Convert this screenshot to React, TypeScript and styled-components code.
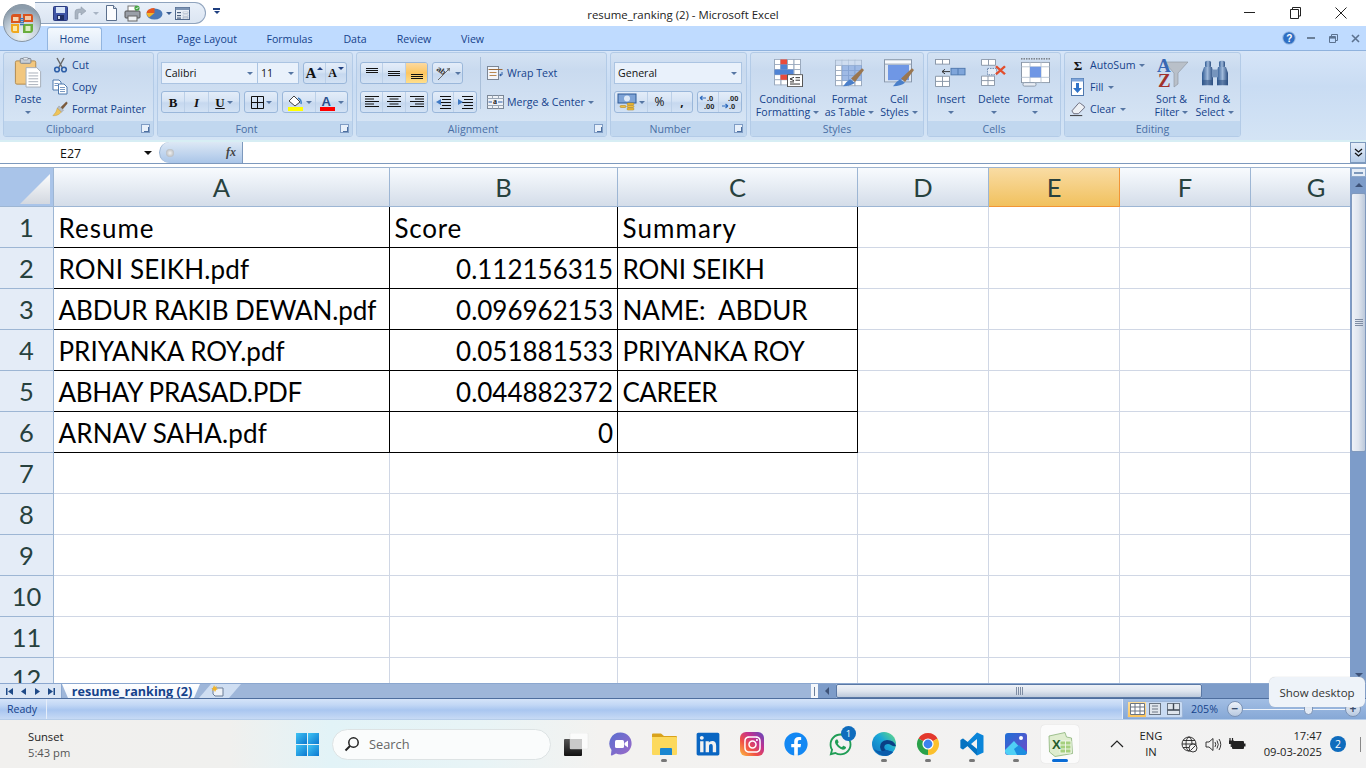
import React from 'react';
import styled, { createGlobalStyle } from 'styled-components';
import { FaLinkedin, FaFacebook, FaWhatsapp, FaInstagram } from 'react-icons/fa';

const Global = createGlobalStyle`
  html, body { margin: 0; padding: 0; background: #fff; overflow: hidden; }
  * { box-sizing: border-box; }
`;
const UI = `"Open Sans", "Noto Sans", "Liberation Sans", sans-serif`;
const CAL = `Lato, "Open Sans", sans-serif`;

const Root = styled.div`
  position: relative; width: 1366px; height: 768px; overflow: hidden;
  display: flex; flex-direction: column; font-family: ${UI}; background: #fff;
`;
/* ---------- title ---------- */
const TitleBar = styled.div`
  height: 26px; flex: none; display: grid; grid-template-columns: 1fr auto 1fr; align-items: center; background: #fff;
`;
const TitleText = styled.div`grid-column: 2; grid-row: 1; font-size: 11.4px; color: #222; padding-top: 2px;`;
const WinControls = styled.div`grid-column: 3; grid-row: 1; display: flex; justify-content: flex-end; padding-right: 2px;`;
const WinBtn = styled.div`width: 46px; height: 26px; display: flex; align-items: center; justify-content: center;`;
const Orb = styled.div`position: absolute; left: 3px; top: 4px; width: 38px; height: 38px; z-index: 3;`;
const Quick = styled.div`
  position: absolute; left: 35px; top: 2px; width: 171px; height: 22px; z-index: 2;
  display: flex; align-items: center; padding-left: 17px;
  background: linear-gradient(#e9f0f9, #dbe5f2); border: 1px solid #8fa3bd; border-left: none; border-radius: 0 12px 12px 0;
`;
const QSlot = styled.div<{ $w: number }>`width: ${p => p.$w}px; height: 20px; display: flex; align-items: center; justify-content: center; flex: none;`;
const QCustom = styled.div`position: absolute; left: 212px; top: 8px; z-index: 2; width: 9px; height: 9px; display: flex; flex-direction: column; align-items: center; gap: 1px;`;
const QBar = styled.div`width: 7px; height: 2px; background: #1f3f80;`;
/* ---------- tabs ---------- */
const TabRow = styled.div`height: 24px; flex: none; background: #bfdbff; display: flex; align-items: flex-end; padding-left: 47px; position: relative;`;
const Tab = styled.div<{ $on?: boolean; $w: number }>`
  height: 23px; width: ${p => p.$w}px; flex: none; font-size: 10.6px; color: #15428b; display: flex; align-items: center; justify-content: center; white-space: nowrap;
  ${p => p.$on ? `background: linear-gradient(#f4f9fe, #dce8f7); border: 1px solid #92b5e0; border-bottom: none; border-radius: 3px 3px 0 0;` : ''}
`;
const MdiControls = styled.div`margin-left: auto; display: flex; align-items: center; height: 24px; padding-right: 0;`;
const MdiBtn = styled.div`width: 22px; height: 20px; display: flex; align-items: center; justify-content: center;`;
/* ---------- ribbon ---------- */
const Ribbon = styled.div`
  height: 92px; flex: none; display: flex; gap: 3px; padding: 1px 2px 4px 3px;
  background: linear-gradient(#d6e5f8, #c9dcf3 40%, #d4e4f5 100%); border-bottom: 2px solid #d7eef4; border-top: 1px solid #8fb2dd;
`;
const Group = styled.div<{ $w: number }>`
  width: ${p => p.$w}px; flex: none; display: flex; flex-direction: column; height: 85px;
  border: 1px solid #b3cbe7; border-radius: 3px; background: linear-gradient(#d4e2f3, #c9daef 20%, #d3e2f3 70%, #d9e7f6);
  overflow: hidden;
`;
const GroupBody = styled.div`flex: 1; display: flex; min-height: 0;`;
const GroupLabel = styled.div<{ $launch?: boolean }>`
  height: 15px; flex: none; background: #c1d7ef; display: flex; align-items: center; justify-content: center; position: relative;
  font-size: 10.6px; color: #4a6fa5; padding-right: ${p => p.$launch ? 17 : 0}px;
`;
const Launcher = styled.div`
  position: absolute; right: 3px; top: 3px; width: 9px; height: 9px; border: 1px solid #7f9cc4; background: #e8f0fa;
  &::after { content: ''; display: block; margin: 2px 0 0 2px; width: 4px; height: 4px; border-right: 1px solid #4d6f9f; border-bottom: 1px solid #4d6f9f; }
`;
const BigBtn = styled.div<{ $w: number }>`
  width: ${p => p.$w}px; flex: none; display: flex; flex-direction: column; align-items: center; padding-top: 3px;
`;
const BigIcon = styled.div<{ $pt?: number }>`height: 37px; padding-top: ${p => p.$pt ?? 3}px; display: flex; align-items: flex-start; justify-content: center; flex: none;`;
const BigLine = styled.div`height: 13px; font-size: 10.6px; line-height: 13px; color: #15428b; white-space: nowrap; display: flex; align-items: center; gap: 3px;`;
const Caret = styled.span<{ $c?: string }>`
  display: inline-block; width: 0; height: 0; flex: none;
  border-left: 3px solid transparent; border-right: 3px solid transparent; border-top: 3px solid ${p => p.$c || '#5676a3'};
`;
const TopCaret = styled(Caret)`align-self: flex-start; margin: 4px 0 0 -1px;`;
const TopCaretUp = styled.span`
  align-self: flex-start; margin: 4px 0 0 -1px; width: 0; height: 0; flex: none;
  border-left: 3px solid transparent; border-right: 3px solid transparent; border-bottom: 3px solid #1f3f80;
`;
const SmallCol = styled.div<{ $ml?: number; $w?: number }>`
  display: flex; flex-direction: column; padding-top: 1px; margin-left: ${p => p.$ml || 0}px; ${p => p.$w ? `width:${p.$w}px;` : ''} flex: none;
`;
const SmallRow = styled.div`height: 22px; display: flex; align-items: center; font-size: 10.6px; color: #15428b; white-space: nowrap; gap: 4px;`;
const SmallIcon = styled.span<{ $w?: number }>`width: ${p => p.$w || 16}px; height: 18px; display: flex; align-items: center; justify-content: center; flex: none;`;
const Stack = styled.div`display: flex; flex-direction: column; gap: 7px; padding: 9px 0 0 3px; flex: none;`;
const Row = styled.div`display: flex; height: 22px; align-items: stretch;`;
const Combo = styled.div<{ $w: number; $ml?: number }>`
  width: ${p => p.$w}px; margin-left: ${p => p.$ml || 0}px; flex: none; height: 22px; display: flex; align-items: center; justify-content: space-between;
  padding: 0 4px 0 3px; background: #e9f1fb; border: 1px solid #abc4e2; font-size: 10.6px; color: #111;
`;
const BtnGroup = styled.div<{ $ml?: number }>`
  display: flex; flex: none; margin-left: ${p => p.$ml || 0}px; border: 1px solid #9ab7da; border-radius: 3px; overflow: hidden;
  background: linear-gradient(#e4edf9, #d5e3f4 45%, #c6d8ef 55%, #d3e2f4);
`;
const Btn = styled.div<{ $w: number; $on?: boolean }>`
  width: ${p => p.$w}px; flex: none; display: flex; align-items: center; justify-content: center; gap: 2px; position: relative;
  border-right: 1px solid #bcd0e8; &:last-child { border-right: none; }
  ${p => p.$on ? 'background: linear-gradient(#fbd9a0, #fdc661 50%, #ffdf8b);' : ''}
`;
const Glyph = styled.span<{ $f?: string; $s?: number; $i?: boolean; $u?: boolean; $b?: boolean; $c?: string }>`
  font-family: ${p => p.$f || '"Liberation Serif", serif'}; font-size: ${p => p.$s || 13}px; line-height: 1;
  font-weight: ${p => p.$b === false ? 400 : 700}; font-style: ${p => p.$i ? 'italic' : 'normal'}; color: ${p => p.$c || '#111'};
  text-decoration: ${p => p.$u ? 'underline' : 'none'};
`;
const VSep = styled.div`width: 1px; height: 52px; background: #a9bfd9; margin: 4px 6px 0 3px; flex: none;`;
const WrapCol = styled.div`display: flex; flex-direction: column; gap: 7px; padding-top: 9px; flex: none;`;
const WrapRow = styled(SmallRow)`gap: 3px;`;
/* ---------- formula ---------- */
const FormulaBar = styled.div`height: 22px; flex: none; display: flex; background: #fff; border-bottom: 1px solid #7d99bd;`;
const NameBox = styled.div`
  width: 157px; flex: none; display: flex; align-items: center; justify-content: space-between; padding: 1px 5px 0 60px;
  font-size: 12.4px; color: #111; font-family: ${UI};
`;
const NameCaret = styled.span`width: 0; height: 0; border-left: 4px solid transparent; border-right: 4px solid transparent; border-top: 4px solid #111;`;
const FxPill = styled.div`
  width: 84px; margin-left: 2px; flex: none; display: flex; align-items: center; justify-content: space-between; padding: 0 6px 0 6px;
  background: linear-gradient(#dde8f5, #a9c5e8); border-radius: 11px 0 0 11px; border-right: 1px solid #7d99bd; border-left: 1px solid #9ab3d1;
`;
const FxDot = styled.span`width: 8px; height: 8px; border-radius: 50%; background: radial-gradient(#f2f2f2, #a3a8ae);`;
const Fx = styled.span`font-family: "Liberation Serif", serif; font-style: italic; font-weight: 700; font-size: 12px; color: #444;`;
const Input = styled.div`flex: 1;`;
const Expand = styled.div`width: 16px; flex: none; background: linear-gradient(#e6eef9, #b7cde8); border: 1px solid #7d99bd; display: flex; align-items: center; justify-content: center;`;
const Gap = styled.div`height: 4px; flex: none; background: #fff; border-bottom: 1px solid #9db3cf;`;
/* ---------- grid ---------- */
const Main = styled.div`height: 515px; flex: none; display: flex;`;
const SheetArea = styled.div`width: 1350px; flex: none; overflow: hidden;`;
const Tr = styled.div<{ $h: number }>`display: flex; height: ${p => p.$h}px;`;
const Corner = styled.div`width: 54px; flex: none; background: #a9c4e9; border-right: 1px solid #9db6d4; border-bottom: 1px solid #9db6d4; display: flex; align-items: flex-end; justify-content: flex-end; padding: 0 3px 2px 0;`;
const ColHead = styled.div<{ $w: number; $on?: boolean }>`
  width: ${p => p.$w}px; flex: none; display: flex; align-items: center; justify-content: center; font-family: ${CAL}; font-size: 25.5px; color: #27413e;
  background: ${p => p.$on ? 'linear-gradient(#f9dca4, #f1c15e)' : 'linear-gradient(#f8fbfe, #d4dde9)'};
  border-right: 1px solid ${p => p.$on ? '#f29536' : '#9db6d4'}; border-bottom: 1px solid ${p => p.$on ? '#f29536' : '#9db6d4'};
`;
const RowHead = styled.div`
  width: 54px; flex: none; background: #e4ecf7; border-right: 1px solid #9db6d4; border-bottom: 1px solid #9db6d4;
  display: flex; align-items: center; justify-content: center; font-family: ${CAL}; font-size: 25.5px; color: #27413e;
`;
const Cell = styled.div<{ $w: number; $box?: boolean; $right?: boolean; $ls?: number }>`
  width: ${p => p.$w}px; flex: none; display: flex; align-items: center; white-space: pre; overflow: hidden;
  justify-content: ${p => p.$right ? 'flex-end' : 'flex-start'}; padding: 2px 4px 0 4.5px;
  font-family: ${CAL}; font-size: 26px; color: #000; letter-spacing: ${p => p.$ls || 0}px;
  border-right: 1px solid ${p => p.$box ? '#000' : '#d0d7e5'}; border-bottom: 1px solid ${p => p.$box ? '#000' : '#d0d7e5'};
`;
const VScroll = styled.div`width: 16px; flex: none; display: flex; flex-direction: column; background: #7d9cc9; border-left: 1px solid #7d9cc9;`;
const Split = styled.div`height: 9px; flex: none; background: #e5edf7; border: 1px solid #8ea9cc; display: flex; align-items: center; justify-content: center;`;
const SplitBar = styled.div`width: 9px; height: 2px; border: 1px solid #7c97ba; background: #fff;`;
const VArrow = styled.div`height: 16px; flex: none; display: flex; align-items: center; justify-content: center;`;
const TriUp = styled.span`width: 0; height: 0; border-left: 4px solid transparent; border-right: 4px solid transparent; border-bottom: 4px solid #3e5379;`;
const TriDown = styled.span`width: 0; height: 0; border-left: 4px solid transparent; border-right: 4px solid transparent; border-top: 4px solid #3e5379;`;
const VThumb = styled.div`height: 259px; flex: none; background: linear-gradient(90deg, #eef2f8, #dfe5ee 50%, #bcc9db); border: 1px solid #8099bd; border-radius: 2px; display: flex; align-items: center; justify-content: center;`;
const Grip = styled.div`width: 8px; height: 7px; background: repeating-linear-gradient(#7f8da3 0 1px, transparent 1px 2px);`;
const VTrack = styled.div`flex: 1;`;
/* ---------- sheet bar ---------- */
const SheetBar = styled.div`height: 16px; flex: none; display: flex; background: #9eb6d9; border-top: 1px solid #8ba7cf; border-bottom: 1px solid #4e6e9e;`;
const Nav = styled.div`width: 62px; flex: none; display: flex; align-items: center; justify-content: space-around; background: #dbe6f5; border-right: 1px solid #8ba7cf; padding: 0 2px;`;
const SheetTab = styled.div`
  width: 138px; flex: none; padding-left: 2px; background: linear-gradient(#fff, #eef4fc); clip-path: polygon(0 0, 100% 0, calc(100% - 6px) 100%, 6px 100%);
  display: flex; align-items: center; justify-content: center; font-size: 12.6px; font-weight: 700; color: #15428b; white-space: nowrap;
`;
const NewTab = styled.div`
  width: 42px; flex: none; margin-left: -1px; padding-right: 6px; background: #cfdef2; clip-path: polygon(12px 0, 100% 0, calc(100% - 12px) 100%, 0 100%);
  display: flex; align-items: center; justify-content: center;
`;
const HSpace = styled.div`width: 570px; flex: none;`;
const HSplit = styled.div`width: 7px; flex: none; background: #f4f7fb; display: flex; align-items: center; justify-content: center;`;
const HSplitBar = styled.div`width: 1px; height: 9px; background: #6c7f9b;`;
const HArrow = styled.div`width: 18px; flex: none; background: #7d9cc9; display: flex; align-items: center; justify-content: center;`;
const TriLeft = styled.span`width: 0; height: 0; border-top: 4px solid transparent; border-bottom: 4px solid transparent; border-right: 4px solid #3e5379;`;
const HThumb = styled.div`width: 366px; flex: none; background: linear-gradient(#eef2f8, #dfe5ee 50%, #bcc9db); border: 1px solid #5a78a5; border-radius: 2px; display: flex; align-items: center; justify-content: center;`;
const HGrip = styled.div`width: 7px; height: 8px; background: repeating-linear-gradient(90deg, #7f8da3 0 1px, transparent 1px 2px);`;
const HRest = styled.div`flex: 1; background: #7d9cc9;`;
/* ---------- status ---------- */
const StatusBar = styled.div`height: 21px; flex: none; display: flex; background: linear-gradient(#d5e4f9, #c2d7f5 30%, #a9c6f0 55%, #c7daf5); border-bottom: 1px solid #b6cde9;`;
const Ready = styled.div`width: 47px; flex: none; padding-left: 7px; display: flex; align-items: center; font-size: 10.6px; color: #15428b; border-right: 1px solid #e6eefa;`;
const StatusFill = styled.div`flex: 1;`;
const ZoomZone = styled.div`width: 244px; flex: none; display: flex; align-items: center; background: linear-gradient(#a2bee4, #86a8d6); padding-left: 4px; border-left: 1px solid #e6eefa;`;
const ViewBtns = styled.div`display: flex; height: 17px; border: 1px solid #9cb5d8; border-radius: 2px; background: #c9dbf2; flex: none;`;
const ViewBtn = styled.div<{ $on?: boolean }>`width: 18px; display: flex; align-items: center; justify-content: center; ${p => p.$on ? 'background: linear-gradient(#fddf9d, #fbc45c);' : ''}`;
const ZoomPct = styled.div`width: 36px; margin-left: 8px; font-size: 10.6px; color: #15428b; flex: none;`;
const ZoomCircle = styled.div`width: 16px; height: 16px; border-radius: 50%; border: 1px solid #7b93b6; background: linear-gradient(#eef3fa, #b8c9e0); display: flex; align-items: center; justify-content: center; flex: none; font-size: 12px; font-weight: 700; line-height: 1; color: #3b4f6e;`;
const SliderTrack = styled.div`width: 102px; height: 1px; background: #eef3fa; flex: none; display: flex; align-items: center; justify-content: flex-end; padding-right: 32px;`;
const SliderKnob = styled.div`width: 9px; height: 11px; background: #e4ebf5; border: 1px solid #7b93b6; border-radius: 2px 2px 5px 5px; flex: none;`;
/* ---------- taskbar ---------- */
const Taskbar = styled.div`
  height: 48px; flex: none; display: flex; align-items: center;
  background: linear-gradient(90deg, #f1f0ee 0, #f0f0ee 230px, #e2f3f7 330px, #e8f4f6 480px, #f3f2f0 600px, #f2f2f2 100%);
`;
const Weather = styled.div`width: 296px; flex: none; padding: 1px 0 0 28px; display: flex; flex-direction: column; font-size: 11.2px; line-height: 16px; color: #222;`;
const WeatherSub = styled.div`color: #555;`;
const WinLogo = styled.div`width: 23px; height: 23px; flex: none; display: grid; grid-template-columns: 11px 11px; grid-template-rows: 11px 11px; gap: 1px;`;
const WinPane = styled.div`background: linear-gradient(135deg, #3fc4f4, #0c78d0);`;
const SearchBox = styled.div`
  width: 219px; height: 31px; margin-left: 13px; flex: none; display: flex; align-items: center; gap: 9px; padding-left: 11px;
  background: #fafcfc; border: 1px solid #dde3e4; border-radius: 16px; font-size: 12.8px; color: #666;
`;
const Dock = styled.div`display: flex; margin-left: 3px; flex: none;`;
const Slot = styled.div<{ $on?: boolean }>`
  width: 44px; height: 48px; flex: none; position: relative; display: flex; align-items: center; justify-content: center;
  ${p => p.$on ? `&::before { content: ''; position: absolute; left: 3px; top: 5px; width: 38px; height: 38px; background: #fbfbfb; border-radius: 4px; box-shadow: 0 0 1px #ccc; }` : ''}
  & > svg { position: relative; }
`;
const Dot = styled.span<{ $on?: boolean }>`
  position: absolute; bottom: 6px; left: 50%; transform: translateX(-50%); height: 3px; border-radius: 2px;
  width: ${p => p.$on ? 16 : 6}px; background: ${p => p.$on ? '#0a6cd6' : '#777'};
`;
const Badge = styled.span`
  position: absolute; right: 6px; top: 6px; width: 15px; height: 15px; border-radius: 50%; background: #0f6cbd; color: #fff;
  font-size: 9.5px; display: flex; align-items: center; justify-content: center;
`;
const Chevron = styled.div`width: 24px; margin-left: 23px; flex: none; display: flex; justify-content: center;`;
const Lang = styled.div`width: 44px; margin-right: 4px; flex: none; text-align: center; font-size: 11.2px; line-height: 16px; color: #222;`;
const Tray = styled.div`width: 24px; flex: none; display: flex; justify-content: center;`;
const Clock = styled.div`width: 73px; flex: none; text-align: right; font-size: 11.2px; line-height: 16px; color: #222;`;
const Count = styled.div`width: 16px; height: 16px; margin-left: 8px; flex: none; border-radius: 50%; background: #0f6cbd; color: #fff; font-size: 10.5px; display: flex; align-items: center; justify-content: center;`;
const Divider = styled.div`width: 1px; height: 15px; margin-left: 14px; background: #888; flex: none;`;
const Tip = styled.div`
  position: absolute; left: 1269px; top: 677px; width: 96px; height: 30px; z-index: 5; background: #eef3f9; border-radius: 6px;
  display: flex; align-items: center; justify-content: center; font-size: 11.5px; color: #333; box-shadow: 0 0 1px #bbb;
`;
const InstaBox = styled.span`
  width: 24px; height: 24px; border-radius: 6px; display: flex; align-items: center; justify-content: center; color: #fff; position: relative;
  background: linear-gradient(45deg, #fbb040 5%, #f15245 35%, #c2318f 65%, #5a4bc0 100%);
`;
const FbWrap = styled.span`width: 24px; height: 24px; display: flex; align-items: center; justify-content: center; border-radius: 50%; background: radial-gradient(#fff 55%, transparent 60%); color: #1388f3;`;

/* ---------- icons ---------- */
const Lines = ({ kind }: { kind: string }) => {
  const ys = kind === 'top' ? [3, 5, 7] : kind === 'mid' ? [6, 8, 10] : kind === 'bot' ? [9, 11, 13] : [2, 4.5, 7, 9.5, 12];
  const isH = ['top', 'mid', 'bot'].includes(kind);
  return (
    <svg width="16" height="16" viewBox="0 0 16 16">
      {ys.map((y, i) => {
        const w = isH ? 12 : i % 2 ? 9 : 14;
        const x = isH ? 2 : kind === 'left' ? 1 : kind === 'center' ? (16 - w) / 2 : 15 - w;
        return <rect key={y} x={x} y={y} width={w} height="1" fill="#111" />;
      })}
    </svg>
  );
};
const Indent = ({ rev }: { rev?: boolean }) => (
  <svg width="17" height="16" viewBox="0 0 17 16">
    {[2, 5, 8, 11, 14].map((y, i) => <rect key={y} x={i % 2 ? 7 : 5} y={y} width={i % 2 ? 9 : 11} height="1" fill="#111" />)}
    <path d={rev ? 'M1 8 L6 5 V11Z' : 'M6 8 L1 5 V11Z'} fill="#3f79c4" />
  </svg>
);
const Save = () => (
  <svg width="15" height="15" viewBox="0 0 15 15">
    <rect x="0.5" y="0.5" width="14" height="14" rx="1" fill="#3f55a6" stroke="#2b3b7f" />
    <rect x="3" y="1" width="9" height="6" fill="#d7e4f7" />
    <rect x="4" y="9" width="7" height="5" fill="#1f2d63" /><rect x="5" y="10" width="2" height="3" fill="#cfd8ea" />
  </svg>
);
const Redo = () => (
  <svg width="15" height="15" viewBox="0 0 15 15">
    <path d="M3 13 V6 Q3 3 7 3 H9 V0.8 L14 5 L9 9 V6.5 H7.5 Q6 6.5 6 8 V13Z" fill="#a9b4c1" stroke="#8a97a6" strokeWidth="0.5" />
  </svg>
);
const NewDoc = () => (
  <svg width="13" height="16" viewBox="0 0 13 16">
    <path d="M1.5 .5 H8.5 L11.5 3.5 V15.5 H1.5Z" fill="#fbfcfe" stroke="#5b6f8c" /><path d="M8.5 .5 V3.5 H11.5" fill="#dbe3ee" stroke="#5b6f8c" />
  </svg>
);
const Printer = () => (
  <svg width="17" height="17" viewBox="0 0 17 17">
    <rect x="4" y="1" width="8" height="6" fill="#fff" stroke="#777" /><rect x="1" y="6" width="15" height="7" rx="1" fill="#9a9fa8" stroke="#555" />
    <rect x="4" y="11" width="9" height="5" fill="#eef1f5" stroke="#666" /><circle cx="13" cy="3" r="2.6" fill="#49a546" /><path d="M11.8 3 L12.8 4 L14.4 2" stroke="#fff" fill="none" strokeWidth=".8" />
  </svg>
);
const Pie = () => (
  <svg width="17" height="13" viewBox="0 0 17 13">
    <ellipse cx="8.5" cy="7" rx="8" ry="5.5" fill="#4a78b6" /><path d="M8.5 6 L.5 6 A8 5 0 0 1 8.5 1Z" fill="#e5561f" /><path d="M.5 6 L8.5 6 L3 10.5 Q.5 8.5 .5 6Z" fill="#f2b429" />
  </svg>
);
const FormIcon = () => (
  <svg width="15" height="13" viewBox="0 0 15 13">
    <rect x=".5" y=".5" width="14" height="12" fill="#e9eff7" stroke="#51698c" /><rect x=".5" y=".5" width="14" height="2.5" fill="#7d94b4" />
    {[5, 8, 10.5].map(y => <rect key={y} x="2" y={y} width="4" height="1.2" fill="#4b5f7d" />)}
    {[5, 8, 10.5].map(y => <rect key={y} x="8" y={y} width="5" height="1.4" fill="#fff" stroke="#7b8ca5" strokeWidth=".4" />)}
  </svg>
);
const OrbIcon = () => (
  <svg width="38" height="38" viewBox="0 0 38 38">
    <defs>
      <radialGradient id="orb" cx="50%" cy="85%" r="75%"><stop offset="0" stopColor="#eef3f7" /><stop offset=".55" stopColor="#c9d4de" /><stop offset="1" stopColor="#8c9cab" /></radialGradient>
    </defs>
    <circle cx="19" cy="19" r="18.5" fill="url(#orb)" stroke="#8795a3" />
    <path d="M8 13 Q8 10 11 10 H18 V19 H8Z" fill="#d9541e" /><path d="M10 13 H15.5 V17 H10Z" fill="#f7d6b0" />
    <path d="M8 20 H16 V29 H11 Q8 29 8 26Z" fill="#f0a81d" /><path d="M10 22 H14 V27 H10Z" fill="#fbe8a4" />
    <path d="M20 10 H28 Q30 10 30 13 V18 H20Z" fill="#d9541e" /><rect x="22" y="12" width="6" height="4" fill="#f3c9a5" />
    <path d="M20 20 H30 V26 Q30 29 27 29 H20Z" fill="#69ad3c" /><rect x="22.5" y="22" width="5" height="5" fill="#dcefc2" />
    {[15, 17, 19, 21].map(y => <rect key={y} x="17" y={y - 1} width="4" height="1.3" fill="#3f78b5" />)}
  </svg>
);
const PasteIcon = () => (
  <svg width="28" height="31" viewBox="0 0 28 32">
    <rect x="1" y="4" width="21" height="24" rx="1.5" fill="#f2c77f" stroke="#b18a4f" />
    <rect x="6" y="1.5" width="11" height="5" rx="1" fill="#c7ced7" stroke="#7c8490" /><rect x="9" y=".5" width="5" height="2.5" rx="1" fill="#e4e8ee" stroke="#7c8490" strokeWidth=".6" />
    <path d="M12 11 H23 L27 15 V31 H12Z" fill="#fff" stroke="#a4adb9" />
    {[16, 19, 22, 25, 28].map(y => <rect key={y} x="14.5" y={y} width="10" height="1" fill="#a8afb9" />)}
  </svg>
);
const Scissors = () => (
  <svg width="15" height="16" viewBox="0 0 15 16">
    <path d="M4 1 L9.5 11 M11 1 L5.5 11" stroke="#666" strokeWidth="1.4" />
    <circle cx="4" cy="12.5" r="2.3" fill="none" stroke="#2e5fa8" strokeWidth="1.6" /><circle cx="11" cy="12.5" r="2.3" fill="none" stroke="#2e5fa8" strokeWidth="1.6" />
  </svg>
);
const CopyIcon = () => (
  <svg width="16" height="16" viewBox="0 0 16 16">
    <path d="M1 1 H7 L9 3 V11 H1Z" fill="#fff" stroke="#4d78ad" /><path d="M6.5 5 H12 L15 8 V15 H6.5Z" fill="#fff" stroke="#4d78ad" />
    {[8, 10, 12].map(y => <rect key={y} x="8" y={y} width="5" height="1" fill="#7b9bc4" />)}{[4, 6].map(y => <rect key={y} x="2.5" y={y} width="4" height="1" fill="#7b9bc4" />)}
  </svg>
);
const Brush = ({ s = 18 }: { s?: number }) => (
  <svg width={s} height={s} viewBox="0 0 18 18">
    <path d="M10 7 L16 1 Q17.5 1 17 3 L12 9Z" fill="#7e5b3b" stroke="#5c4028" strokeWidth=".4" /><path d="M8 5.5 L13 10.5 L10.5 12.5 L6 8Z" fill="#b9bfc6" stroke="#777" strokeWidth=".4" />
    <path d="M6 8 L10.5 12.5 Q7 17 1 16.5 Q5 13 6 8Z" fill="#eec45b" stroke="#b48a2a" strokeWidth=".4" />
  </svg>
);
const BordersIcon = () => (
  <svg width="13" height="13" viewBox="0 0 13 13"><path d="M.5 .5 H12.5 V12.5 H.5Z M6.5 .5 V12.5 M.5 6.5 H12.5" fill="none" stroke="#111" /></svg>
);
const FillIcon = () => (
  <svg width="17" height="17" viewBox="0 0 17 17">
    <path d="M2 7 L7 2 L13 8 L8 12Z" fill="#fff" stroke="#444" /><path d="M11 4 Q15 6 14 10" fill="none" stroke="#3c7fc4" strokeWidth="1.4" /><rect x="1" y="13" width="15" height="4" fill="#ffff00" />
  </svg>
);
const OrientIcon = () => (
  <svg width="18" height="16" viewBox="0 0 18 16">
    <g transform="rotate(38 7 7)"><text x="1" y="9" fontFamily="Liberation Sans, sans-serif" fontSize="8" fontWeight="700" fill="#333">ab</text></g>
    <path d="M3 15 L15 3" stroke="#6b6b6b" strokeWidth="1" /><path d="M15 3 L11.5 3.5 L14.5 6.5Z" fill="#6b6b6b" />
  </svg>
);
const WrapIcon = () => (
  <svg width="17" height="16" viewBox="0 0 17 16">
    <rect x=".5" y="1.5" width="11" height="13" fill="#f3f6fb" stroke="#7b8796" /><rect x="1.5" y="4" width="14" height="1" fill="#9a6a3c" /><rect x="2.5" y="7" width="7" height="1" fill="#b98a54" /><rect x="2.5" y="10" width="7" height="1" fill="#b98a54" />
    <path d="M15 7 V10 H13" stroke="#2e5fa8" fill="none" /><path d="M12 10 L14 8.5 V11.5Z" fill="#2e5fa8" />
  </svg>
);
const MergeIcon = () => (
  <svg width="17" height="16" viewBox="0 0 17 16">
    <rect x=".5" y="1.5" width="16" height="13" fill="#eef2f7" stroke="#7b8796" /><path d="M.5 4.5 H16.5 M.5 11.5 H16.5 M5.5 1.5 V4.5 M11.5 1.5 V4.5 M5.5 11.5 V14.5 M11.5 11.5 V14.5" stroke="#9aa6b5" />
    <text x="6" y="10.3" fontFamily="Liberation Serif, serif" fontSize="8" fontWeight="700" fill="#222">a</text>
    <path d="M1.5 8 H5 M11 8 H15.5" stroke="#2e5fa8" />
  </svg>
);
const Accounting = () => (
  <svg width="20" height="18" viewBox="0 0 20 18">
    <rect x="1" y="1" width="18" height="9" fill="#7ea3d6" stroke="#2f5b96" /><ellipse cx="10" cy="5.5" rx="3" ry="3" fill="#dce8f7" />
    <rect x="10" y="10" width="7" height="2" rx="1" fill="#f2bf3d" stroke="#a97d17" strokeWidth=".5" /><rect x="10" y="12.5" width="7" height="2" rx="1" fill="#f2bf3d" stroke="#a97d17" strokeWidth=".5" /><rect x="10" y="15" width="7" height="2" rx="1" fill="#f2bf3d" stroke="#a97d17" strokeWidth=".5" />
    <rect x="3" y="12.5" width="6" height="2" rx="1" fill="#f2bf3d" stroke="#a97d17" strokeWidth=".5" />
  </svg>
);
const Decimal = ({ more }: { more?: boolean }) => (
  <svg width="18" height="16" viewBox="0 0 18 16" fontFamily="Liberation Sans, sans-serif" fontSize="7.5" fontWeight="700" fill="#222">
    <text x={more ? 8 : 7} y="7">{more ? '.0' : '.00'}</text><text x={more ? 5 : 8} y="14.5">{more ? '.00' : '.0'}</text>
    <path d={more ? 'M1 4 H7 M1 4 L3.5 2 M1 4 L3.5 6' : 'M1 12 H7 M7 12 L4.5 10 M7 12 L4.5 14'} stroke="#2e6bbd" strokeWidth="1.2" fill="none" />
  </svg>
);
const Cells3 = ({ x, y, c, r, w, h }: { x: number; y: number; c: number; r: number; w: number; h: number }) => (
  <g>
    {Array.from({ length: r }).flatMap((_, j) => Array.from({ length: c }).map((__, i) => (
      <rect key={`${i}-${j}`} x={x + i * w + .5} y={y + j * h + .5} width={w} height={h} fill="#fff" stroke="#9aa9bd" />
    )))}
  </g>
);
const CondFmt = () => (
  <svg width="30" height="28" viewBox="0 0 30 33" preserveAspectRatio="none">
    <Cells3 x={1} y={0} c={4} r={5} w={6.5} h={6} />
    <rect x="7.5" y=".5" width="6.5" height="6" fill="#ea4b3b" /><rect x="7.5" y="6.5" width="6.5" height="6" fill="#4e82d4" /><rect x="1.5" y="12.5" width="19" height="6" fill="#4e82d4" />
    <rect x="7.5" y="18.5" width="6.5" height="6" fill="#ea4b3b" /><rect x="14" y="24.5" width="6.5" height="6" fill="#4e82d4" />
    <rect x="14.5" y="18.5" width="15" height="14" fill="#fff" stroke="#555" />
    <path d="M21 21.5 L17 23.5 L21 25.5 M17 27 H21 M22.5 22 H27 M22.5 25 H27 M17 29.5 H27" stroke="#222" fill="none" />
  </svg>
);
const TableFmt = () => (
  <svg width="31" height="28" viewBox="0 0 31 33" preserveAspectRatio="none">
    <Cells3 x={1} y={1} c={4} r={5} w={6.5} h={6} />
    <rect x="1.5" y="1.5" width="26" height="6" fill="#c3d4ec" opacity=".8" /><rect x="8" y="7.5" width="20" height="18" fill="#7fa3dc" opacity=".75" />
    <path d="M9 32 Q12 27 16 24 L21 28 Q17 32 9 32Z" fill="#4a7fc9" /><path d="M17 23 L28 11 L30 13 L21 27Z" fill="#9a7650" />
  </svg>
);
const CellStyle = () => (
  <svg width="31" height="28" viewBox="0 0 31 33" preserveAspectRatio="none">
    <rect x=".5" y="1" width="27" height="26" fill="#dfe7f2" stroke="#8796aa" /><rect x="4" y="7" width="21" height="18" fill="#6f97e5" />
    <rect x=".5" y="1" width="27" height="5" fill="#f8fafd" stroke="#8796aa" />
    <path d="M9 32 Q12 27 16 24 L21 28 Q17 32 9 32Z" fill="#4a7fc9" /><path d="M17 23 L28 11 L30 13 L21 27Z" fill="#9a7650" />
  </svg>
);
const InsertIcon = () => (
  <svg width="32" height="28" viewBox="0 0 32 30" preserveAspectRatio="none">
    <rect x=".5" y=".5" width="14" height="5" fill="#fff" stroke="#8a97a8" /><path d="M7.5 .5 V5.5" stroke="#8a97a8" />
    <path d="M.5 18.5 H14.5 V29.5 H.5Z M7.5 18.5 V29.5 M.5 24 H14.5" fill="#fff" stroke="#8a97a8" />
    <rect x="16" y="10" width="14" height="7" fill="#7fa5da" stroke="#4f78ae" /><path d="M23 10 V17" stroke="#4f78ae" />
    <path d="M7 13.5 H15 M7 13.5 L10 11 M7 13.5 L10 16" stroke="#333" fill="none" />
  </svg>
);
const DeleteIcon = () => (
  <svg width="26" height="27" viewBox="0 0 26 30" preserveAspectRatio="none">
    <path d="M.5 .5 H14.5 V7 H.5Z M7.5 .5 V7" fill="#fff" stroke="#8a97a8" /><path d="M.5 19 H13.5 V29.5 H.5Z M7 19 V29.5 M.5 24 H13.5" fill="#fff" stroke="#8a97a8" />
    <rect x="6.5" y="10.5" width="9" height="7" fill="#e7eef8" stroke="#6a86ad" strokeDasharray="1.5 1" />
    <path d="M15 8 L24 17 M24 8 L15 17" stroke="#e24e2d" strokeWidth="2.4" />
  </svg>
);
const FormatIcon = () => (
  <svg width="31" height="29" viewBox="0 0 31 33" preserveAspectRatio="none">
    <path d="M1 1 H30" stroke="#444" strokeDasharray="1.5 1" />
    <rect x="1.5" y="5" width="28" height="23" fill="#fff" stroke="#8a97a8" /><path d="M1.5 10 H29.5 M1.5 22 H29.5 M10 5 V28 M21 5 V28" stroke="#b8c3d1" />
    <rect x="10" y="10" width="11" height="12" fill="#6f97e5" /><rect x="3" y="28" width="13" height="4" rx="1.5" fill="#e8edf4" stroke="#8a97a8" />
  </svg>
);
const FillDown = () => (
  <svg width="14" height="18" viewBox="0 0 14 18">
    <rect x=".5" y=".5" width="12" height="17" fill="#fff" stroke="#4f78ae" /><rect x=".5" y=".5" width="12" height="3" fill="#7fa5da" />
    <path d="M5 5 H8 V10 H11 L6.5 15 L2 10 H5Z" fill="#2f73c8" />
  </svg>
);
const Eraser = () => (
  <svg width="17" height="16" viewBox="0 0 17 16">
    <path d="M2 10 L9 2 Q10 1 11 2 L15 5 Q16 6 15 7 L9 13 H4Z" fill="#eef1f5" stroke="#667" /><path d="M0 15 H13" stroke="#333" />
  </svg>
);
const SortIcon = () => (
  <svg width="32" height="36" viewBox="0 0 32 36" fontFamily="Liberation Serif, serif" fontWeight="700" fontSize="19">
    <path d="M8 6 H32 L22 17 V28 L18 31 V17Z" fill="#b9c0c9" stroke="#8b929c" strokeWidth=".6" />
    <text x="1" y="16" fill="#3767b4">A</text><text x="2" y="31" fill="#a1322b">Z</text>
  </svg>
);
const Binoculars = () => (
  <svg width="28" height="26" viewBox="0 0 28 30" preserveAspectRatio="none">
    <defs><linearGradient id="bin" x1="0" x2="1" y1="0" y2="0"><stop offset="0" stopColor="#2f5a93" /><stop offset=".5" stopColor="#9fb9da" /><stop offset="1" stopColor="#2a4d80" /></linearGradient></defs>
    <rect x="4" y="1" width="6" height="8" rx="2" fill="url(#bin)" /><rect x="18" y="1" width="6" height="8" rx="2" fill="url(#bin)" />
    <path d="M3 8 H11 L12 14 V29 H1 V15Z" fill="url(#bin)" /><path d="M17 8 H25 L27 15 V29 H16 V14Z" fill="url(#bin)" /><rect x="11" y="11" width="6" height="9" fill="#7695bd" /><rect x="1" y="23" width="11" height="6" fill="#2c4e80" opacity=".55" /><rect x="16" y="23" width="11" height="6" fill="#2c4e80" opacity=".55" />
  </svg>
);
const NavIcon = ({ d }: { d: string }) => <svg width="9" height="9" viewBox="0 0 9 9"><path d={d} fill="#1f4a87" /></svg>;
const NewSheetIcon = () => (
  <svg width="15" height="12" viewBox="0 0 15 12">
    <path d="M3 3 H13 V11 H5 L3 9Z" fill="#eef2f8" stroke="#6b7d96" /><path d="M4 0 L5 2 L7 1 L6 3 L8 4 L6 5 L5 7 L4 5 L2 6 L3 4 L1 3 L3 3Z" fill="#f2b429" />
  </svg>
);
const ViewGrid = () => <svg width="15" height="12" viewBox="0 0 15 12"><path d="M.5 .5 H14.5 V11.5 H.5Z M.5 4 H14.5 M.5 8 H14.5 M5 .5 V11.5 M10 .5 V11.5" fill="#fff" stroke="#6a7583" /></svg>;
const ViewPage = () => <svg width="12" height="12" viewBox="0 0 12 12"><rect x=".5" y=".5" width="11" height="11" fill="#dfe5ec" stroke="#6a7583" /><path d="M3 3 H9 M3 6 H9 M3 9 H9" stroke="#6a7583" /></svg>;
const ViewBreak = () => <svg width="13" height="12" viewBox="0 0 13 12"><rect x=".5" y=".5" width="12" height="11" fill="#dfe5ec" stroke="#6a7583" /><path d="M6.5 .5 V7 M.5 7 H12.5" stroke="#3c4552" strokeWidth="1.4" /></svg>;
const SearchIcon = () => <svg width="16" height="16" viewBox="0 0 16 16"><circle cx="9.5" cy="6.5" r="4.7" fill="none" stroke="#222" strokeWidth="1.5" /><path d="M6 10 L1.5 14.5" stroke="#222" strokeWidth="2" /></svg>;
const TaskView = () => (
  <svg width="25" height="23" viewBox="0 0 25 23">
    <defs><linearGradient id="tv" x1="0" x2="0" y1="0" y2="1"><stop offset="0" stopColor="#555" /><stop offset="1" stopColor="#111" /></linearGradient></defs>
    <rect x="0" y="6" width="18" height="17" rx="1" fill="url(#tv)" /><rect x="6" y="0" width="18" height="16" rx="1" fill="#fff" opacity=".75" stroke="#ddd" strokeWidth=".5" />
    <rect x="6" y="6" width="12" height="10" fill="#c9c9c9" />
  </svg>
);
const MeetIcon = () => (
  <svg width="24" height="24" viewBox="0 0 24 24">
    <defs><linearGradient id="mt" x1="0" x2="1" y1="0" y2="1"><stop offset="0" stopColor="#5a6fd0" /><stop offset="1" stopColor="#9c6ac8" /></linearGradient></defs>
    <path d="M12.5 .5 A11 11 0 1 1 8 21.5 L4 23.5 Q2.5 24 3 22 L3.5 18 A11 11 0 0 1 12.5 .5Z" fill="url(#mt)" /><rect x="7" y="8" width="9" height="8" rx="1.5" fill="#fff" /><path d="M16.5 11 L20 8.5 V15.5 L16.5 13Z" fill="#fff" />
  </svg>
);
const FolderIcon = () => (
  <svg width="25" height="22" viewBox="0 0 25 22">
    <path d="M0 1.5 Q0 .5 1 .5 H9 L12 3 H24 Q25 3 25 4 V8 H0Z" fill="#d9a21b" /><path d="M0 4 H24 Q25 4 25 5 V21 Q25 22 24 22 H1 Q0 22 0 21Z" fill="#fcd95c" />
    <path d="M8 16 Q8 15 9 15 H19 Q20 15 20 16 V22 H8Z" fill="#1a86d0" />
  </svg>
);
const EdgeIcon = () => (
  <svg width="24" height="24" viewBox="0 0 24 24">
    <defs>
      <linearGradient id="e1" x1="0" x2="1" y1="1" y2="0"><stop offset="0" stopColor="#0d6fc0" /><stop offset=".55" stopColor="#1aa6d8" /><stop offset="1" stopColor="#6ee07a" /></linearGradient>
    </defs>
    <circle cx="12" cy="12" r="12" fill="url(#e1)" />
    <path d="M24 14 Q22 8 15 8 Q8 9 8 15 Q9 21 15 22 Q19 22 21 20 Q17 19 14 18 Q11 16 13 13 Q16 11 19 13 Q22 15 24 14Z" fill="#0a3f86" />
    <path d="M14 18 Q17 19 21 20 Q19 23 14 24 Q6 24 2 17 Q8 21 14 18Z" fill="#0b5cab" />
  </svg>
);
const ChromeIcon = () => (
  <svg width="24" height="24" viewBox="0 0 24 24">
    <path d="M12 12 L2.47 6.5 A11 11 0 0 1 21.53 6.5Z" fill="#e3392d" /><path d="M12 12 L21.53 6.5 A11 11 0 0 1 12 23Z" fill="#fbc02d" /><path d="M12 12 L12 23 A11 11 0 0 1 2.47 6.5Z" fill="#2aa24a" />
    <circle cx="12" cy="12" r="5.6" fill="#fff" /><circle cx="12" cy="12" r="4.4" fill="#3c83ee" />
  </svg>
);
const VsCodeIcon = () => (
  <svg width="24" height="24" viewBox="0 0 24 24">
    <path fillRule="evenodd" d="M17 .5 L23.5 3.5 V20.5 L17 23.5 L7.5 14 L3 17.5 L.5 16 V8 L3 6.5 L7.5 10 Z M17 7 L11 12 L17 17Z" fill="#0a85d9" />
    <path d="M.5 8 L3 6.5 L17 17 L17 23.5 L7.5 14 L3 17.5 L.5 16Z" fill="#0465ad" opacity=".55" />
  </svg>
);
const PhotosIcon = () => (
  <svg width="22" height="22" viewBox="0 0 22 22">
    <defs><linearGradient id="ph" x1="0" x2="1" y1="0" y2="1"><stop offset="0" stopColor="#1e70d6" /><stop offset="1" stopColor="#7048c8" /></linearGradient></defs>
    <rect width="22" height="22" rx="3" fill="url(#ph)" /><circle cx="16" cy="5" r="2" fill="#fff" /><path d="M0 17 L9 8 L19 19 Q18 22 16 22 H4 Q1 22 0 19Z" fill="#4fd0f5" /><path d="M9 16 L14 12 L22 19 Q22 22 19 22 H12Z" fill="#1c8ee0" />
  </svg>
);
const ExcelIcon = () => (
  <svg width="25" height="25" viewBox="0 0 25 25">
    <path d="M1 4 L17 .5 L18.5 5 L23.5 6 L24.5 21.5 L7 24.5 L1.5 20Z" fill="#dfedcf" stroke="#7dab6a" strokeWidth=".7" />
    <path d="M12 9 H23 V21 H12Z M12 13 H23 M12 17 H23 M17.5 9 V21" fill="#a5d07e" stroke="#f3f8ec" strokeWidth=".9" />
    <text x="4" y="17" fontFamily="Liberation Sans, sans-serif" fontWeight="700" fontSize="13" fill="#245c2c">X</text>
  </svg>
);
const ChevUp = () => <svg width="14" height="8" viewBox="0 0 14 8"><path d="M1 7 L7 1 L13 7" fill="none" stroke="#222" strokeWidth="1.2" /></svg>;
const GlobeIcon = () => (
  <svg width="17" height="17" viewBox="0 0 17 17" fill="none" stroke="#222" strokeWidth=".9">
    <circle cx="8" cy="8" r="7" /><ellipse cx="8" cy="8" rx="3" ry="7" /><path d="M1 8 H15 M2 4.5 H14 M2 11.5 H14" />
    <circle cx="12" cy="12" r="4" fill="#f2f2f2" /><path d="M9.5 14.5 L14.5 9.5" />
  </svg>
);
const VolumeIcon = () => (
  <svg width="17" height="15" viewBox="0 0 17 15" fill="none" stroke="#222" strokeWidth=".9">
    <path d="M1 5 H4 L8 1.5 V13.5 L4 10 H1Z" /><path d="M10 5 Q11.5 7.5 10 10 M12 3.5 Q14.5 7.5 12 11.5 M14 2 Q17.5 7.5 14 13" />
  </svg>
);
const BatteryIcon = () => (
  <svg width="17" height="13" viewBox="0 0 17 13">
    <rect x="3" y="3" width="12" height="8" rx="1" fill="#222" /><rect x="15" y="5.5" width="1.5" height="3" fill="#222" /><path d="M1 0 V3 M3.5 0 V3 M0 3 H5 M2.3 6 V9" stroke="#222" strokeWidth="1.2" /><rect x="0" y="3" width="5" height="3" fill="#222" />
  </svg>
);

/* ---------- data ---------- */
const COLS = [
  { k: 'A', w: 336 }, { k: 'B', w: 228 }, { k: 'C', w: 240 }, { k: 'D', w: 131 }, { k: 'E', w: 131 }, { k: 'F', w: 131 }, { k: 'G', w: 131 },
];
type Val = { t: string; ls?: number };
const DATA: Val[][] = [
  [{ t: 'Resume', ls: 1 }, { t: 'Score', ls: 0.8 }, { t: 'Summary', ls: 1.1 }],
  [{ t: 'RONI SEIKH.pdf', ls: 0.15 }, { t: '0.112156315' }, { t: 'RONI SEIKH', ls: -0.2 }],
  [{ t: 'ABDUR RAKIB DEWAN.pdf', ls: -0.14 }, { t: '0.096962153' }, { t: 'NAME:  ABDUR' }],
  [{ t: 'PRIYANKA ROY.pdf' }, { t: '0.051881533' }, { t: 'PRIYANKA ROY', ls: -0.15 }],
  [{ t: 'ABHAY PRASAD.PDF', ls: -0.3 }, { t: '0.044882372' }, { t: 'CAREER', ls: -0.5 }],
  [{ t: 'ARNAV SAHA.pdf', ls: 0.15 }, { t: '0' }, { t: '' }],
];
const TABS = [
  { t: 'Home', w: 55 }, { t: 'Insert', w: 59 }, { t: 'Page Layout', w: 92 }, { t: 'Formulas', w: 73 },
  { t: 'Data', w: 58 }, { t: 'Review', w: 60 }, { t: 'View', w: 57 },
];

export default function App() {
  return (
    <Root>
      <Global />
      <TitleBar>
        <TitleText>resume_ranking (2) - Microsoft Excel</TitleText>
        <WinControls>
          <WinBtn><svg width="11" height="2"><rect width="11" height="1" fill="#222" /></svg></WinBtn>
          <WinBtn><svg width="11" height="12" viewBox="0 0 11 12"><path d="M.5 2.5 H8.5 V11.5 H.5Z M2.5 2.5 V.5 H10.5 V9 H8.5" fill="none" stroke="#222" /></svg></WinBtn>
          <WinBtn><svg width="12" height="12" viewBox="0 0 12 12"><path d="M.5 .5 L11.5 11.5 M11.5 .5 L.5 11.5" stroke="#222" /></svg></WinBtn>
        </WinControls>
      </TitleBar>
      <Orb><OrbIcon /></Orb>
      <Quick>
        <QSlot $w={16}><Save /></QSlot>
        <QSlot $w={22}><Redo /></QSlot>
        <QSlot $w={11}><Caret $c="#a8b4c4" /></QSlot>
        <QSlot $w={21}><NewDoc /></QSlot>
        <QSlot $w={21}><Printer /></QSlot>
        <QSlot $w={22}><Pie /></QSlot>
        <QSlot $w={8}><Caret $c="#385c92" /></QSlot>
        <QSlot $w={19}><FormIcon /></QSlot>
      </Quick>
      <QCustom><QBar /><Caret $c="#1f3f80" /></QCustom>
      <TabRow>
        {TABS.map((t, i) => <Tab key={t.t} $w={t.w} $on={i === 0}>{t.t}</Tab>)}
        <MdiControls>
          <MdiBtn><svg width="14" height="14" viewBox="0 0 14 14"><circle cx="7" cy="7" r="6.3" fill="#2f6fc4" stroke="#a9c4e6" /><text x="4.2" y="10.5" fontSize="10" fontWeight="700" fontFamily="Liberation Sans, sans-serif" fill="#fff">?</text></svg></MdiBtn>
          <MdiBtn><svg width="8" height="3"><rect width="8" height="2" fill="#6b7f98" /></svg></MdiBtn>
          <MdiBtn><svg width="9" height="9" viewBox="0 0 9 9"><path d="M.5 2.5 H6.5 V8.5 H.5Z M2.5 2.5 V.5 H8.5 V6.5 H6.5" fill="none" stroke="#5c7290" /><rect x="1" y="3" width="5" height="1.6" fill="#5c7290" /></svg></MdiBtn>
          <MdiBtn><svg width="9" height="9" viewBox="0 0 9 9"><path d="M1 1 L8 8 M8 1 L1 8" stroke="#5c7290" strokeWidth="1.6" /></svg></MdiBtn>
        </MdiControls>
      </TabRow>
      <Ribbon>
        <Group $w={151}>
          <GroupBody>
            <BigBtn $w={48}><BigIcon $pt={1}><PasteIcon /></BigIcon><BigLine>Paste</BigLine><BigLine><Caret /></BigLine></BigBtn>
            <SmallCol>
              <SmallRow><SmallIcon><Scissors /></SmallIcon>Cut</SmallRow>
              <SmallRow><SmallIcon><CopyIcon /></SmallIcon>Copy</SmallRow>
              <SmallRow><SmallIcon><Brush /></SmallIcon>Format Painter</SmallRow>
            </SmallCol>
          </GroupBody>
          <GroupLabel $launch>Clipboard<Launcher /></GroupLabel>
        </Group>
        <Group $w={196}>
          <GroupBody>
            <Stack>
              <Row>
                <Combo $w={97}>Calibri<Caret /></Combo>
                <Combo $w={42} $ml={-1}>11<Caret /></Combo>
                <BtnGroup $ml={4}>
                  <Btn $w={22}><Glyph $s={15}>A</Glyph><TopCaretUp /></Btn>
                  <Btn $w={20}><Glyph $s={12}>A</Glyph><TopCaret $c="#1f3f80" /></Btn>
                </BtnGroup>
              </Row>
              <Row>
                <BtnGroup>
                  <Btn $w={23}><Glyph>B</Glyph></Btn>
                  <Btn $w={24}><Glyph $i>I</Glyph></Btn>
                  <Btn $w={30}><Glyph $u>U</Glyph><Caret /></Btn>
                </BtnGroup>
                <BtnGroup $ml={4}><Btn $w={32}><BordersIcon /><Caret /></Btn></BtnGroup>
                <BtnGroup $ml={4}>
                  <Btn $w={33}><FillIcon /><Caret /></Btn>
                  <Btn $w={31}><svg width="17" height="17" viewBox="0 0 17 17"><text x="2.5" y="12" fontFamily="Liberation Sans, sans-serif" fontWeight="700" fontSize="13" fill="#2a4f8c">A</text><rect x="1" y="13" width="15" height="4" fill="#ff0000" /></svg><Caret /></Btn>
                </BtnGroup>
              </Row>
            </Stack>
          </GroupBody>
          <GroupLabel $launch>Font<Launcher /></GroupLabel>
        </Group>
        <Group $w={251}>
          <GroupBody>
            <Stack>
              <Row>
                <BtnGroup>
                  <Btn $w={22}><Lines kind="top" /></Btn><Btn $w={23}><Lines kind="mid" /></Btn><Btn $w={21} $on><Lines kind="bot" /></Btn>
                </BtnGroup>
                <BtnGroup $ml={4}><Btn $w={29}><OrientIcon /><Caret /></Btn></BtnGroup>
              </Row>
              <Row>
                <BtnGroup>
                  <Btn $w={22}><Lines kind="left" /></Btn><Btn $w={23}><Lines kind="center" /></Btn><Btn $w={21}><Lines kind="right" /></Btn>
                </BtnGroup>
                <BtnGroup $ml={4}><Btn $w={21}><Indent rev /></Btn><Btn $w={22}><Indent /></Btn></BtnGroup>
              </Row>
            </Stack>
            <VSep />
            <WrapCol>
              <WrapRow><SmallIcon $w={17}><WrapIcon /></SmallIcon>Wrap Text</WrapRow>
              <WrapRow><SmallIcon $w={17}><MergeIcon /></SmallIcon>Merge &amp; Center<Caret /></WrapRow>
            </WrapCol>
          </GroupBody>
          <GroupLabel $launch>Alignment<Launcher /></GroupLabel>
        </Group>
        <Group $w={137}>
          <GroupBody>
            <Stack>
              <Row><Combo $w={128}>General<Caret /></Combo></Row>
              <Row>
                <BtnGroup>
                  <Btn $w={33}><Accounting /><Caret /></Btn><Btn $w={24}><Glyph $f={UI} $s={12} $b={false}>%</Glyph></Btn><Btn $w={20}><Glyph $f={UI} $s={12}>,</Glyph></Btn>
                </BtnGroup>
                <BtnGroup $ml={4}><Btn $w={21}><Decimal more /></Btn><Btn $w={22}><Decimal /></Btn></BtnGroup>
              </Row>
            </Stack>
          </GroupBody>
          <GroupLabel $launch>Number<Launcher /></GroupLabel>
        </Group>
        <Group $w={174}>
          <GroupBody>
            <BigBtn $w={73}><BigIcon><CondFmt /></BigIcon><BigLine>Conditional</BigLine><BigLine>Formatting<Caret /></BigLine></BigBtn>
            <BigBtn $w={51}><BigIcon><TableFmt /></BigIcon><BigLine>Format</BigLine><BigLine>as Table<Caret /></BigLine></BigBtn>
            <BigBtn $w={48}><BigIcon><CellStyle /></BigIcon><BigLine>Cell</BigLine><BigLine>Styles<Caret /></BigLine></BigBtn>
          </GroupBody>
          <GroupLabel>Styles</GroupLabel>
        </Group>
        <Group $w={134}>
          <GroupBody>
            <BigBtn $w={46}><BigIcon><InsertIcon /></BigIcon><BigLine>Insert</BigLine><BigLine><Caret /></BigLine></BigBtn>
            <BigBtn $w={40}><BigIcon><DeleteIcon /></BigIcon><BigLine>Delete</BigLine><BigLine><Caret /></BigLine></BigBtn>
            <BigBtn $w={42}><BigIcon $pt={2}><FormatIcon /></BigIcon><BigLine>Format</BigLine><BigLine><Caret /></BigLine></BigBtn>
          </GroupBody>
          <GroupLabel>Cells</GroupLabel>
        </Group>
        <Group $w={177}>
          <GroupBody>
            <SmallCol $ml={5} $w={80}>
              <SmallRow><SmallIcon><Glyph $s={13}>Σ</Glyph></SmallIcon>AutoSum<Caret /></SmallRow>
              <SmallRow><SmallIcon><FillDown /></SmallIcon>Fill<Caret /></SmallRow>
              <SmallRow><SmallIcon><Eraser /></SmallIcon>Clear<Caret /></SmallRow>
            </SmallCol>
            <BigBtn $w={43}><BigIcon $pt={0}><SortIcon /></BigIcon><BigLine>Sort &amp;</BigLine><BigLine>Filter<Caret /></BigLine></BigBtn>
            <BigBtn $w={43}><BigIcon $pt={4}><Binoculars /></BigIcon><BigLine>Find &amp;</BigLine><BigLine>Select<Caret /></BigLine></BigBtn>
          </GroupBody>
          <GroupLabel>Editing</GroupLabel>
        </Group>
      </Ribbon>
      <FormulaBar>
        <NameBox>E27<NameCaret /></NameBox>
        <FxPill><FxDot /><Fx>fx</Fx></FxPill>
        <Input />
        <Expand><svg width="9" height="9" viewBox="0 0 9 9"><path d="M1 1 L4.5 4 L8 1 M1 5 L4.5 8 L8 5" stroke="#111" fill="none" strokeWidth="1.3" /></svg></Expand>
      </FormulaBar>
      <Gap />
      <Main>
        <SheetArea>
          <Tr $h={39}>
            <Corner><svg width="30" height="30" viewBox="0 0 30 30"><defs><linearGradient id="cn" x1="0" x2="0" y1="0" y2="1"><stop offset="0" stopColor="#fbfcfd" /><stop offset="1" stopColor="#d3d8e0" /></linearGradient></defs><path d="M30 0 V30 H0Z" fill="url(#cn)" /></svg></Corner>
            {COLS.map(c => <ColHead key={c.k} $w={c.w} $on={c.k === 'E'}>{c.k}</ColHead>)}
          </Tr>
          {Array.from({ length: 12 }).map((_, r) => (
            <Tr key={r} $h={41}>
              <RowHead>{r + 1}</RowHead>
              {COLS.map((c, i) => {
                const boxed = r < 6 && i < 3;
                const v = boxed ? DATA[r][i] : undefined;
                const right = boxed && i === 1 && r > 0;
                return <Cell key={c.k} $w={c.w} $box={boxed} $right={right} $ls={v?.ls}>{v?.t}</Cell>;
              })}
            </Tr>
          ))}
        </SheetArea>
        <VScroll>
          <Split><SplitBar /></Split>
          <VArrow><TriUp /></VArrow>
          <VThumb><Grip /></VThumb>
          <VTrack />
          <VArrow><TriDown /></VArrow>
        </VScroll>
      </Main>
      <SheetBar>
        <Nav>
          <NavIcon d="M1 1 H2.5 V8 H1Z M8 1 V8 L3 4.5Z" /><NavIcon d="M7 1 V8 L2 4.5Z" /><NavIcon d="M2 1 V8 L7 4.5Z" /><NavIcon d="M1 1 V8 L6 4.5Z M6.5 1 H8 V8 H6.5Z" />
        </Nav>
        <SheetTab>resume_ranking (2)</SheetTab>
        <NewTab><NewSheetIcon /></NewTab>
        <HSpace />
        <HSplit><HSplitBar /></HSplit>
        <HArrow><TriLeft /></HArrow>
        <HThumb><HGrip /></HThumb>
        <HRest />
      </SheetBar>
      <StatusBar>
        <Ready>Ready</Ready>
        <StatusFill />
        <ZoomZone>
          <ViewBtns><ViewBtn $on><ViewGrid /></ViewBtn><ViewBtn><ViewPage /></ViewBtn><ViewBtn><ViewBreak /></ViewBtn></ViewBtns>
          <ZoomPct>205%</ZoomPct>
          <ZoomCircle>−</ZoomCircle>
          <SliderTrack><SliderKnob /></SliderTrack>
          <ZoomCircle>+</ZoomCircle>
        </ZoomZone>
      </StatusBar>
      <Taskbar>
        <Weather>Sunset<WeatherSub>5:43 pm</WeatherSub></Weather>
        <WinLogo><WinPane /><WinPane /><WinPane /><WinPane /></WinLogo>
        <SearchBox><SearchIcon />Search</SearchBox>
        <Dock>
          <Slot><TaskView /></Slot>
          <Slot><MeetIcon /></Slot>
          <Slot><FolderIcon /><Dot /></Slot>
          <Slot><FaLinkedin size={26} color="#0a66c2" /></Slot>
          <Slot><InstaBox><FaInstagram size={19} /></InstaBox></Slot>
          <Slot><FbWrap><FaFacebook size={24} /></FbWrap></Slot>
          <Slot><FaWhatsapp size={25} color="#1f9d55" /><Badge>1</Badge></Slot>
          <Slot><EdgeIcon /><Dot /></Slot>
          <Slot><ChromeIcon /><Dot /></Slot>
          <Slot><VsCodeIcon /><Dot /></Slot>
          <Slot><PhotosIcon /><Dot /></Slot>
          <Slot $on><ExcelIcon /><Dot $on /></Slot>
        </Dock>
        <Chevron><ChevUp /></Chevron>
        <Lang>ENG<br />IN</Lang>
        <Tray><GlobeIcon /></Tray>
        <Tray><VolumeIcon /></Tray>
        <Tray><BatteryIcon /></Tray>
        <Clock>17:47<br />09-03-2025</Clock>
        <Count>2</Count>
        <Divider />
      </Taskbar>
      <Tip>Show desktop</Tip>
    </Root>
  );
}
